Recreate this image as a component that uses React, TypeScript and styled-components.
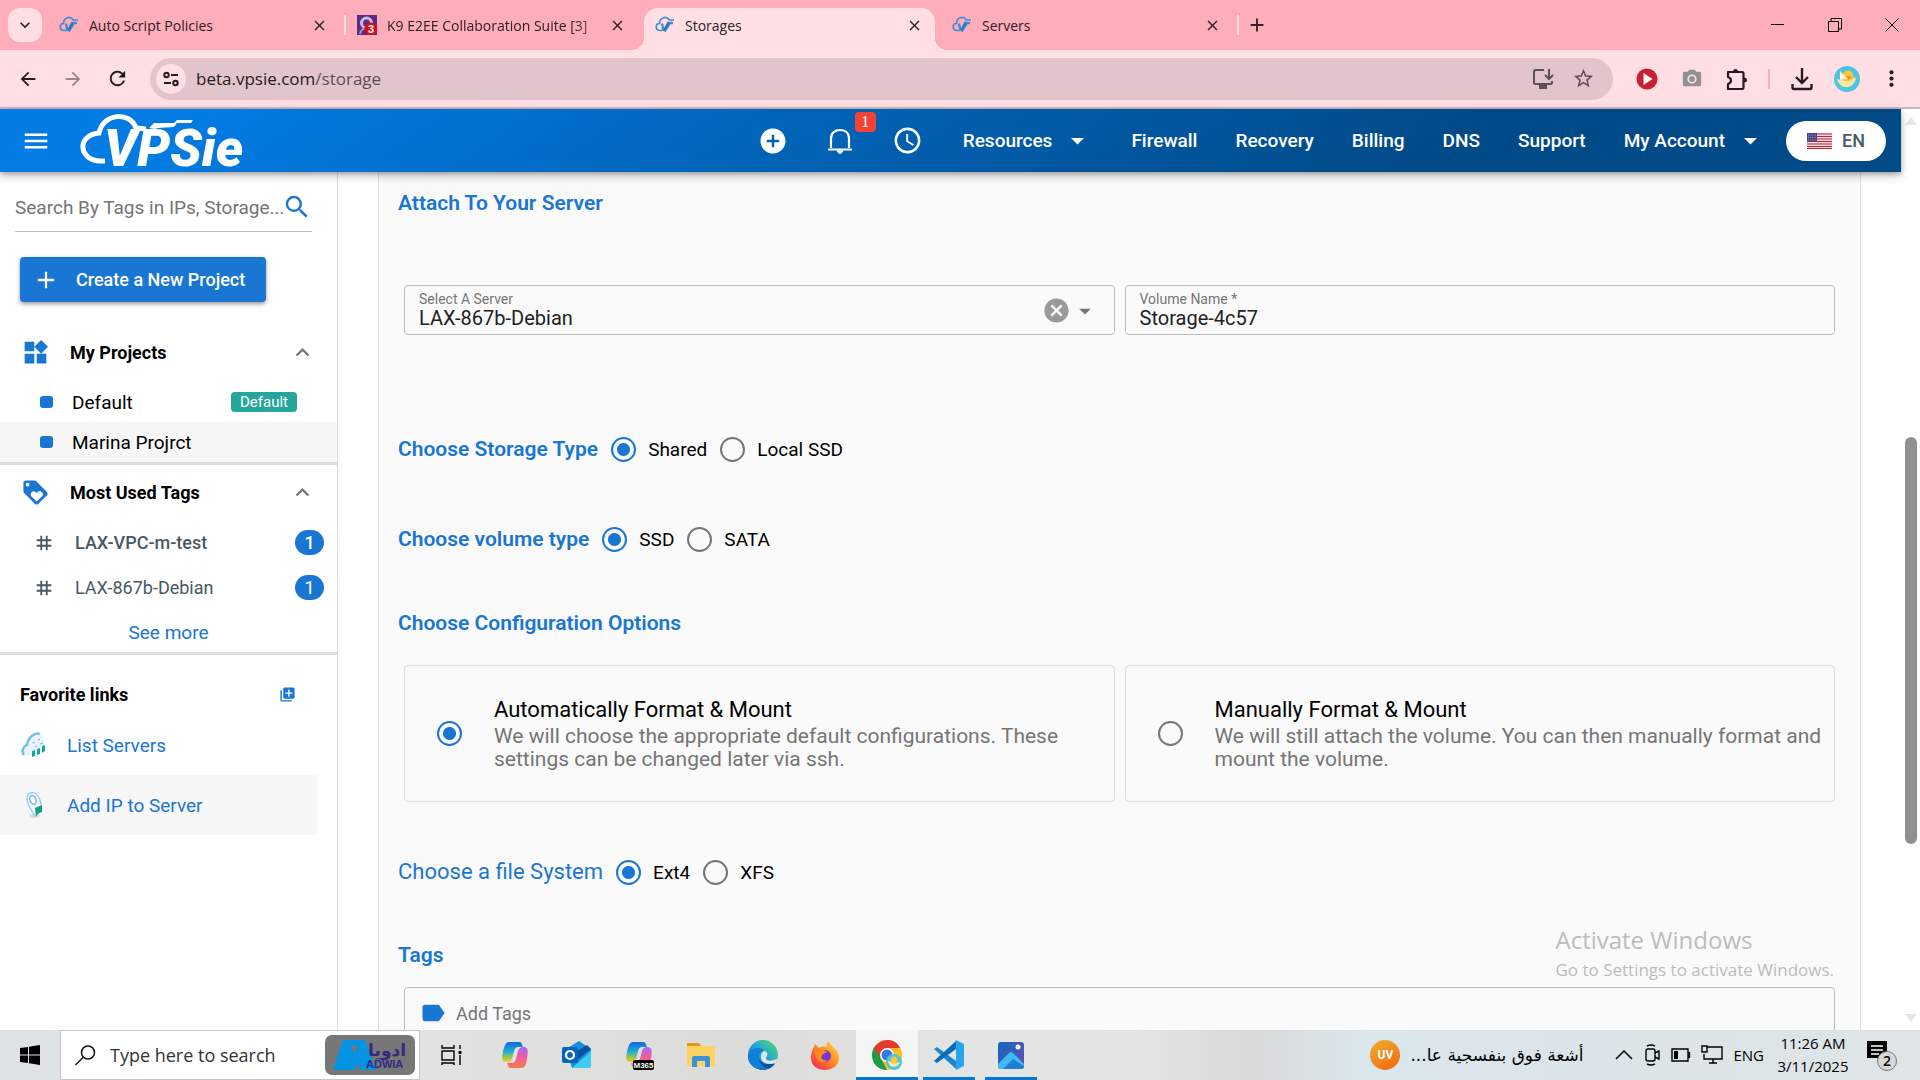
import React from "react";
import styled, { createGlobalStyle, css } from "styled-components";
import {
  MdAccessTime, MdAdd, MdAddCircle, MdArrowBack, MdArrowDropDown, MdArrowForward, MdCancel, MdClose,
  MdExpandLess, MdLabel, MdLibraryAdd, MdLoyalty, MdMenu, MdMoreVert, MdNotificationsNone,
  MdOutlineExtension, MdPhotoCamera, MdRefresh, MdSearch, MdStarBorder,
  MdTag, MdWidgets, MdExpandMore,
} from "react-icons/md";

const BLUE = "#1976d2";
const UI = `Roboto, "Liberation Sans", sans-serif`;
const SYS = `"Open Sans", "Noto Sans", sans-serif`;

const GlobalStyle = createGlobalStyle`
  *, *::before, *::after { box-sizing: border-box; }
  body { margin: 0; background: #fff; }
  button, input, select { font: inherit; color: inherit; }
  button { border: 0; padding: 0; background: none; cursor: pointer; display: inline-flex; align-items: center; justify-content: center; }
  a { text-decoration: none; color: inherit; }
  svg { display: block; flex: none; }
`;

const Screen = styled.div`
  display: flex;
  flex-direction: column;
  height: 100vh;
  overflow: hidden;
  font-family: ${UI};
  font-size: 18px;
  color: #000;
`;

/* ---------- browser chrome ---------- */
const TabStrip = styled.div`
  display: flex;
  align-items: center;
  height: 50px;
  flex: none;
  padding-left: 8px;
  background: #ffacbb;
  font-family: ${SYS};
  font-size: 14px;
  color: #2b2126;
`;
const TabMenu = styled.button`
  width: 34px;
  height: 34px;
  margin-right: 6px;
  border-radius: 12px;
  background: #ffdee4;
`;
const Tab = styled.div<{ $active?: boolean; $line?: boolean }>`
  display: flex;
  align-items: center;
  gap: 10px;
  width: 298px;
  height: 42px;
  align-self: flex-end;
  padding: 0 18px 8px 11px;
  position: relative;
  ${(p) => p.$line && css`
    &::after { content: ""; position: absolute; right: 0; top: 7px; width: 2px; height: 20px; background: #ffdee4; }
  `}
  ${(p) => p.$active && css`
    width: 291px;
    margin-right: 6px;
    padding-right: 12px;
    background: #ffdee4;
    border-radius: 14px 14px 0 0;
    &::before, &::after { content: ""; position: absolute; bottom: 0; width: 12px; height: 12px; }
    &::before { left: -12px; background: radial-gradient(circle at 0 0, transparent 12px, #ffdee4 12px); }
    &::after { right: -12px; background: radial-gradient(circle at 100% 0, transparent 12px, #ffdee4 12px); }
  `}
`;
const TabTitle = styled.span<{ $fade?: boolean }>`
  flex: 1;
  overflow: hidden;
  white-space: nowrap;
  ${(p) => p.$fade && css`mask-image: linear-gradient(90deg, #000 88%, transparent 110%);`}
`;
const NewTab = styled.button`
  width: 36px;
  height: 34px;
`;
const WindowButtons = styled.div`
  display: flex;
  margin-left: auto;
`;
const WindowButton = styled.button`
  width: 57px;
  height: 50px;
`;
const Toolbar = styled.div`
  display: flex;
  align-items: center;
  height: 59px;
  flex: none;
  padding: 0 6px 0 5px;
  background: #ffdee4;
  border-bottom: 2px solid #cdb3ba;
  font-family: ${SYS};
  color: #241c20;
`;
const ToolButton = styled.button<{ $w?: number; $dim?: boolean }>`
  width: ${(p) => p.$w ?? 45}px;
  height: 40px;
  opacity: ${(p) => (p.$dim ? 0.45 : 1)};
`;
const AddressBar = styled.div`
  display: flex;
  align-items: center;
  flex: 1;
  height: 42px;
  margin: 0 11px 0 10px;
  padding: 0 10px 0 6px;
  border-radius: 21px;
  background: #e1c5cb;
  color: #5c5054;
`;
const SiteInfo = styled.button`
  width: 30px;
  height: 30px;
  margin-right: 10px;
  border-radius: 50%;
  background: #ffdee4;
  color: #241c20;
`;
const Address = styled.span`
  flex: 1;
  font-size: 17px;
  b { font-weight: 400; color: #241c20; }
`;
const ToolDivider = styled.span`
  width: 2px;
  height: 20px;
  margin: 0 9px;
  background: #ffacbb;
`;

/* ---------- application header ---------- */
const Viewport = styled.div`
  display: flex;
  flex: 1;
  min-height: 0;
`;
const Site = styled.div`
  display: flex;
  flex-direction: column;
  flex: 1;
  min-width: 0;
`;
const Header = styled.header`
  display: flex;
  align-items: center;
  height: 63px;
  flex: none;
  padding: 0 15px 0 21px;
  position: relative;
  z-index: 1;
  background: linear-gradient(145deg, #027be3 11%, #014a88 75%);
  box-shadow: 0 2px 4px rgba(0, 0, 0, 0.2), 0 4px 9px rgba(0, 0, 0, 0.22);
  color: #fff;
  font-weight: 500;
`;
const LogoLink = styled.a`
  margin-left: 28px;
`;
const HeaderIcons = styled.div`
  display: flex;
  align-items: center;
  gap: 37px;
  margin-left: auto;
  margin-right: 40px;
`;
const IconButton = styled.button`
  position: relative;
`;
const Alert = styled.span`
  position: absolute;
  left: 30px;
  top: -14px;
  width: 21px;
  height: 20px;
  border-radius: 4px;
  background: #f44336;
  font: 16px/20px "Liberation Serif", serif;
`;
const Nav = styled.nav`
  display: flex;
  align-items: center;
  gap: 38px;
  font-size: 19px;
`;
const NavMenu = styled.button`
  gap: 10px;
  font-weight: 500;
`;
const Language = styled.button`
  gap: 10px;
  width: 100px;
  height: 40px;
  margin-left: 20px;
  border-radius: 20px;
  background: #fff;
  color: #455a64;
  font-weight: 500;
`;
const Body = styled.div`
  display: flex;
  flex: 1;
  min-height: 0;
`;

/* ---------- side bar ---------- */
const Sidebar = styled.aside`
  width: 338px;
  flex: none;
  border-right: 1px solid #ddd;
`;
const Search = styled.div`
  display: flex;
  align-items: center;
  height: 60px;
  margin: 0 25px 0 15px;
  padding-top: 11px;
  border-bottom: 1px solid #bdbdbd;
  color: ${BLUE};
  input {
    flex: 1;
    min-width: 0;
    margin-right: -4px;
    border: 0;
    padding: 0;
    outline: 0;
    background: none;
    font-size: 19px;
  }
  input::placeholder { color: #757575; opacity: 1; }
`;
const CreateButton = styled.button`
  justify-content: flex-start;
  gap: 16px;
  width: 246px;
  height: 45px;
  margin: 25px 0 20px 20px;
  padding-left: 12px;
  border-radius: 4px;
  background: ${BLUE};
  box-shadow: 0 2px 4px rgba(0, 0, 0, 0.4);
  color: #fff;
  font-weight: 500;
`;
const GroupHead = styled.button<{ $h: number }>`
  display: flex;
  width: 100%;
  height: ${(p) => p.$h}px;
  padding: 0 21px;
  justify-content: flex-start;
  gap: 20px;
  font-weight: 700;
  text-align: left;
  span { flex: 1; }
`;
const Group = styled.section`
  border-bottom: 3px solid #dedede;
`;
const Project = styled.a<{ $on?: boolean }>`
  display: flex;
  align-items: center;
  gap: 19px;
  height: 40px;
  padding: 0 40px;
  background: ${(p) => (p.$on ? "#f7f7f7" : "none")};
  font-size: 19px;
  &::before { content: ""; width: 13px; height: 12px; border-radius: 3px; background: ${BLUE}; }
`;
const DefaultBadge = styled.span`
  margin-left: auto;
  padding: 0 9px;
  border-radius: 4px;
  background: #26a69a;
  color: #fff;
  font-size: 15px;
  line-height: 20px;
`;
const TagRow = styled.a<{ $bold?: boolean }>`
  display: flex;
  align-items: center;
  gap: 20px;
  height: 45px;
  padding: 0 13px 0 33px;
  color: #455a64;
  font-weight: ${(p) => (p.$bold ? 500 : 400)};
`;
const Count = styled.span`
  width: 29px;
  margin-left: auto;
  border-radius: 13px;
  background: ${BLUE};
  color: #fff;
  text-align: center;
  line-height: 25px;
`;
const SeeMore = styled.a`
  display: block;
  height: 42px;
  color: ${BLUE};
  font-size: 19px;
  text-align: center;
  line-height: 46px;
`;
const Favorites = styled.div`
  display: flex;
  align-items: center;
  justify-content: space-between;
  height: 60px;
  padding: 18px 41px 0 20px;
  h2 { margin: 0; font-size: 18px; }
`;
const Favorite = styled.a<{ $on?: boolean }>`
  display: flex;
  align-items: center;
  gap: 19px;
  height: 60px;
  margin-right: 20px;
  padding-left: 20px;
  background: ${(p) => (p.$on ? "#f7f7f7" : "none")};
  color: ${BLUE};
  font-size: 19px;
`;

/* ---------- form ---------- */
const Main = styled.main`
  flex: 1;
  min-width: 0;
  padding: 0 40px;
  overflow: hidden;
`;
const Panel = styled.form`
  display: flex;
  flex-direction: column;
  padding: 19px 25px 40px 19px;
  border: solid #ddd;
  border-width: 0 1px;
  background: #fafafa;
`;
const Heading = styled.h2<{ $light?: boolean }>`
  margin: 0;
  color: ${BLUE};
  font-size: ${(p) => (p.$light ? 22 : 21)}px;
  line-height: 24px;
  font-weight: ${(p) => (p.$light ? 400 : 600)};
`;
const Pair = styled.div<{ $top: number }>`
  display: grid;
  grid-template-columns: 1fr 1fr;
  gap: 10px;
  margin: ${(p) => p.$top}px 0 0 6px;
`;
const Field = styled.div`
  position: relative;
  height: 50px;
  border: 1px solid #bdbdbd;
  border-radius: 4px;
  label {
    position: absolute;
    left: 14px;
    top: 5px;
    color: #757575;
    font-size: 14px;
    line-height: 16px;
  }
  input, select {
    width: 100%;
    height: 48px;
    padding: 15px 14px 0;
    border: 0;
    outline: 0;
    background: none;
    appearance: none;
    color: #212121;
    font-size: 20px;
  }
`;
const FieldTools = styled.div`
  position: absolute;
  right: 15px;
  top: 10px;
  display: flex;
  align-items: center;
  color: #757575;
  pointer-events: none;
  button { color: #999; }
`;
const RadioRow = styled.div<{ $top: number }>`
  display: flex;
  align-items: center;
  height: 40px;
  margin-top: ${(p) => p.$top}px;
`;
const RadioLabel = styled.label`
  display: flex;
  align-items: center;
  gap: 12px;
  margin-left: 13px;
  font-size: 19px;
`;
const Radio = styled.input.attrs({ type: "radio" })`
  flex: none;
  width: 25px;
  height: 25px;
  margin: 0;
  border: 2px solid #757575;
  border-radius: 50%;
  appearance: none;
  &:checked {
    border-color: ${BLUE};
    background: radial-gradient(circle, ${BLUE} 6px, transparent 7px);
  }
`;
const Section = styled.div<{ $top: number }>`
  margin-top: ${(p) => p.$top}px;
`;
const Card = styled.label`
  display: flex;
  align-items: center;
  gap: 32px;
  min-height: 137px;
  padding: 0 8px 0 32px;
  border: 1px solid #ddd;
  border-radius: 4px;
`;
const CardTitle = styled.span`
  display: block;
  padding-bottom: 2px;
  font-size: 22px;
  line-height: 26px;
`;
const CardText = styled.span`
  display: block;
  color: #757575;
  font-size: 21px;
  line-height: 23px;
`;
const TagBox = styled.div`
  display: flex;
  align-items: center;
  gap: 9px;
  height: 52px;
  margin: 20px 0 0 6px;
  padding-left: 14px;
  border: 1px solid #bdbdbd;
  border-radius: 4px;
  color: ${BLUE};
  input { flex: 1; border: 0; padding: 0; outline: 0; background: none; }
  input::placeholder { color: #757575; opacity: 1; }
`;
const ScrollTrack = styled.div`
  display: flex;
  flex-direction: column;
  align-items: center;
  justify-content: space-between;
  width: 19px;
  flex: none;
  padding: 8px 0;
  background: #fff;
  color: #e3e7ea;
`;
const ScrollThumb = styled.div`
  width: 12px;
  height: 45%;
  margin-top: 142px;
  border-radius: 6px;
  background: #909090;
`;
const Watermark = styled.div`
  position: absolute;
  right: 86px;
  bottom: 96px;
  z-index: 2;
  color: #bcbcbc;
  font-family: ${SYS};
  font-size: 17px;
  line-height: 28px;
  pointer-events: none;
  strong { display: block; font-weight: 400; font-size: 24px; line-height: 32px; }
`;

/* ---------- task bar ---------- */
const Taskbar = styled.footer`
  display: flex;
  align-items: center;
  height: 50px;
  flex: none;
  background: linear-gradient(90deg, #dde3e5 0, #e2e3e1 22%, #dcdcda 38%, #e4e6e5 52%, #e3e3e2 60%, #d8d9d8 65%, #dbe6ed 71%, #dbe4e8 84%, #dfe5e7 100%);
  font-family: ${SYS};
  color: #000;
`;
const Start = styled.button`
  width: 60px;
  height: 50px;
`;
const TaskSearch = styled.label`
  display: flex;
  align-items: center;
  gap: 14px;
  width: 360px;
  height: 50px;
  padding: 0 4px 0 14px;
  border: 1px solid #c6c6c6;
  background: #fff;
  input { flex: 1; min-width: 0; border: 0; padding: 0; outline: 0; background: none; font-size: 18px; }
  input::placeholder { color: #333; opacity: 1; }
`;
const TaskButton = styled.button<{ $open?: boolean; $active?: boolean }>`
  width: 62px;
  height: 50px;
  position: relative;
  ${(p) => p.$active && css`background: #f4f5f5;`}
  ${(p) => p.$open && css`
    &::after { content: ""; position: absolute; left: ${p.$active ? 0 : 5}px; right: ${p.$active ? 0 : 5}px; bottom: 0; height: 3px; background: #0078d7; }
  `}
`;
const PinnedApps = styled.div`
  display: flex;
  margin-left: 2px;
`;
const Tray = styled.div`
  display: flex;
  align-items: center;
  margin-left: auto;
  font-size: 15px;
`;
const Weather = styled.button`
  gap: 10px;
  margin-right: 32px;
  font: 17px "DejaVu Sans", sans-serif;
`;
const Uv = styled.span`
  width: 30px;
  border-radius: 50%;
  background: linear-gradient(150deg, #ecb02c, #f4640f);
  color: #fff;
  font: 700 12px/30px ${UI};
`;
const TrayIcons = styled.div`
  display: flex;
  align-items: center;
  gap: 10px;
`;
const Clock = styled.time`
  width: 98px;
  text-align: center;
  font-size: 15px;
  line-height: 23px;
`;
const Notices = styled.button`
  width: 38px;
  height: 50px;
  margin-right: 20px;
`;

const Favicon = () => (
  <svg width="20" height="20" viewBox="0 0 20 20" fill="none" stroke="#3f8fd0">
    <path d="M7 15.500H4.500C0 15 .3 8.500 4.500 8.500 4.500 2 12 .8 14.200 5H19" strokeWidth="1.700" />
    <path d="M7 8.500l1.500 7.500M9.500 16.500L15 8h3" strokeWidth="2.400" />
    <path d="M9.300 15l4.500-8" stroke="#2878bd" strokeWidth="2.400" />
  </svg>
);
const Logo = () => (
  <svg width="177" height="63" viewBox="0 -4 177 63" role="img" aria-label="VPSie">
    <path d="M26 48h-6C-1 46-2 22 20 20c4-20 31-22 37-5l10 1" fill="none" stroke="#fff" strokeWidth="5" />
    <path d="M70 15l5-5h20l3-3h10l-2 3h-8l-3 4-16 1-3 1zM106 7h8l-2 3h-8z" fill="#fff" />
    <text x="25" y="53" fill="#fff" fontFamily="Roboto, sans-serif" fontSize="52" fontWeight="900" fontStyle="italic">VPSie</text>
  </svg>
);
const K9 = () => (
  <svg width="20" height="20" viewBox="0 0 20 20">
    <path fill="#5b2c83" d="M0 0h20v20H0z" />
    <circle cx="9.500" cy="8" r="5" fill="none" stroke="#c9bcd8" strokeWidth="3" />
    <path d="M3 19c1-5 4-6 7-6" stroke="#a78fc2" strokeWidth="2" fill="none" />
    <circle cx="14" cy="14" r="6.500" fill="#d90d18" />
    <text x="14" y="18" textAnchor="middle" fill="#fff" fontSize="11" fontWeight="700" fontFamily="Liberation Sans">3</text>
  </svg>
);
const Avatar = ({ size = 26 }: { size?: number }) => (
  <svg width={size} height={size} viewBox="0 0 26 26">
    <circle cx="13" cy="13" r="13" fill="#4cc5df" />
    <path d="M3 13c2 9 12 11 17 4 2-3 2-5 1-6l-6 4-8-1z" fill="#fbe6a8" />
    <circle cx="14" cy="10" r="5.500" fill="#f6c83c" />
    <path d="M6 5l7 8-7 1z" fill="#fff4cf" />
    <path d="M13 10l5 1-4 3z" fill="#e98622" />
  </svg>
);
const Flag = () => (
  <svg width="25" height="16" viewBox="0 0 25 16">
    <path fill="#f3d9dc" d="M0 0h25v16H0z" />
    <path d="M0 1h25M0 3.500h25M0 6h25M0 8.500h25M0 11h25M0 13.500h25M0 15.500h25" stroke="#b9253f" strokeWidth="1.200" />
    <path fill="#46467f" d="M0 0h10v8.500H0z" />
    <path d="M1 2h8M1 4.500h8M1 7h8" stroke="#b9b9d5" strokeWidth=".8" strokeDasharray="1 1.200" />
  </svg>
);
const CloudServers = () => (
  <svg width="28" height="28" viewBox="0 0 28 28">
    <path d="M3 23c-3-4-1-8 3-10C7 5 14 0 20 3c4 2 5 7 4 11L13 26z" fill="#e9f5fc" />
    <path d="M4 24c-3-4-1-8 3-10C8 6 15 1 20 3" fill="none" stroke="#79bfe8" strokeWidth="2.500" />
    <path d="M12 20l3-1v6l-3 1zM17 18l3-1v6l-3 1zM22 15l3-1v6l-3 2z" fill="#12a79d" />
    <path d="M13 12l2-1M18 9l2-1M20 13l3-1M15 16l2-1" stroke="#8fb6cf" strokeWidth="1.300" />
  </svg>
);
const PinIp = () => (
  <svg width="28" height="28" viewBox="0 0 28 28">
    <ellipse cx="14" cy="25" rx="5" ry="2" fill="#d9dde0" />
    <path d="M15 25c-4-6-8-12-8-17C7 2 12 0 16 3c5 4 6 13 4 18z" fill="#eef7fc" stroke="#8cc8e8" strokeWidth="1.200" />
    <ellipse cx="13" cy="9" rx="3" ry="4.500" fill="#fff" stroke="#7fb9dd" strokeWidth="1.600" transform="rotate(-20 13 9)" />
    <path d="M15 17l7-3v7l-3 1-3 3z" fill="#12a07c" />
  </svg>
);
const Copilot = () => (
  <>
    <path d="M9 2h10c3 0 3 3 4 5h-5c-4 0-4 5-6 12-1 2-3 3-5 3-6 0-5-4-4-11C5 5 6 2 9 2z" fill="url(#cop1)" />
    <path d="M21 28H11c-3 0-3-3-4-5h5c4 0 4-5 6-12 1-3 3-4 5-4 6 0 5 5 4 12-1 6-2 9-6 9z" fill="url(#cop2)" />
  </>
);
const Glyph = ({ children }: { children: React.ReactNode }) => (
  <svg width="30" height="30" viewBox="0 0 30 30">{children}</svg>
);
const Gradients = () => (
  <svg width="0" height="0" aria-hidden="true">
    <defs>
      <linearGradient id="cop1" x1="0" y1="0" x2="0" y2="1"><stop stopColor="#1766d9" /><stop offset=".45" stopColor="#19a9d8" /><stop offset=".8" stopColor="#a6ca44" /><stop offset="1" stopColor="#f5c822" /></linearGradient>
      <linearGradient id="cop2" x1="0" y1="0" x2="0" y2="1"><stop stopColor="#a468ec" /><stop offset=".5" stopColor="#ee5f9e" /><stop offset="1" stopColor="#fa7849" /></linearGradient>
      <linearGradient id="edge" x1="0" y1="1" x2="1" y2="0"><stop stopColor="#0b5fc4" /><stop offset=".5" stopColor="#1ca7dc" /><stop offset="1" stopColor="#5cd860" /></linearGradient>
      <linearGradient id="fox" x1="1" y1="0" x2="0" y2="1"><stop stopColor="#ffe33d" /><stop offset=".5" stopColor="#ff8420" /><stop offset="1" stopColor="#ee1a62" /></linearGradient>
      <linearGradient id="pho" x1="0" y1="0" x2="1" y2="1"><stop stopColor="#1367c1" /><stop offset="1" stopColor="#6a4caf" /></linearGradient>
    </defs>
  </svg>
);

const tabs = [
  { title: "Auto Script Policies", line: true },
  { title: "K9 E2EE Collaboration Suite [3]", k9: true },
  { title: "Storages", active: true },
  { title: "Servers", line: true },
];

const RadioGroup = ({ name, options }: { name: string; options: string[] }) => (
  <>
    {options.map((o, i) => (
      <RadioLabel key={o}><Radio name={name} defaultChecked={i === 0} />{o}</RadioLabel>
    ))}
  </>
);

export default function App() {
  return (
    <Screen>
      <GlobalStyle />
      <TabStrip>
        <TabMenu aria-label="Search tabs"><MdExpandMore size={20} /></TabMenu>
        {tabs.map((t) => (
          <Tab key={t.title} $active={t.active} $line={t.line}>
            {t.k9 ? <K9 /> : <Favicon />}
            <TabTitle $fade={t.k9}>{t.title}</TabTitle>
            <button aria-label="Close tab"><MdClose size={17} /></button>
          </Tab>
        ))}
        <NewTab aria-label="New tab"><MdAdd size={22} /></NewTab>
        <WindowButtons>
          <WindowButton aria-label="Minimize"><svg width="13" height="13" stroke="#000"><path d="M0 5.500h13" /></svg></WindowButton>
          <WindowButton aria-label="Restore"><svg width="14" height="14" fill="none" stroke="#000"><path d="M.5 3.500h10v10H.5zM3 3V.5h10.500V11H11" /></svg></WindowButton>
          <WindowButton aria-label="Close"><svg width="14" height="14" stroke="#000"><path d="M.5.5l13 13M13.500.5l-13 13" /></svg></WindowButton>
        </WindowButtons>
      </TabStrip>
      <Toolbar>
        <ToolButton aria-label="Back"><MdArrowBack size={22} /></ToolButton>
        <ToolButton aria-label="Forward" $dim><MdArrowForward size={22} /></ToolButton>
        <ToolButton aria-label="Reload"><MdRefresh size={23} /></ToolButton>
        <AddressBar>
          <SiteInfo aria-label="Site information">
            <svg width="16" height="16" fill="none" stroke="currentColor" strokeWidth="2"><circle cx="3.500" cy="4" r="2.200" /><path d="M8 4h7M1 12h7" /><circle cx="12.500" cy="12" r="2.200" /></svg>
          </SiteInfo>
          <Address><b>beta.vpsie.com</b>/storage</Address>
          <ToolButton $w={40} aria-label="Install app">
            <svg width="22" height="22" fill="none" stroke="currentColor" strokeWidth="2"><path d="M12 2H3.500Q2 2 2 3.500v11Q2 16 3.500 16h15q1.500 0 1.500-1.500V13M7 20h8M17 1v9M13 7l4 4 4-4" /><path d="M8 17h6v3H8z" fill="currentColor" /></svg>
          </ToolButton>
          <ToolButton $w={40} aria-label="Bookmark"><MdStarBorder size={23} /></ToolButton>
        </AddressBar>
        <ToolButton aria-label="Video extension">
          <svg width="22" height="22"><circle cx="11" cy="11" r="10.500" fill="#c91f31" /><path d="M7.500 5l9 6-9 6z" fill="#fff" /></svg>
        </ToolButton>
        <ToolButton aria-label="Screenshot extension"><MdPhotoCamera size={22} color="#929292" /></ToolButton>
        <ToolButton aria-label="Extensions">
          <svg width="22" height="22" fill="none" stroke="currentColor" strokeWidth="2.200" strokeLinejoin="round"><path d="M2 4h14q1.500 0 1.500 1.500v14q0 1.500-1.500 1.500H2v-5q3-1 3-3.500T2 9z" /><path d="M7 4q0-3 2.500-3T12 4zM17.500 9.500q3.500 0 3.500 2.500t-3.500 2.500z" fill="currentColor" stroke="none" /></svg>
        </ToolButton>
        <ToolDivider />
        <ToolButton aria-label="Downloads">
          <svg width="22" height="24" fill="none" stroke="currentColor" strokeWidth="2.400"><path d="M11 1v14M5 10l6 6 6-6M1.500 17v3.500q0 1.500 1.500 1.500h16q1.500 0 1.500-1.500V17" /></svg>
        </ToolButton>
        <ToolButton aria-label="Profile"><Avatar /></ToolButton>
        <ToolButton aria-label="Menu"><MdMoreVert size={25} /></ToolButton>
      </Toolbar>

      <Viewport>
        <Site>
          <Header>
            <IconButton aria-label="Menu"><MdMenu size={30} /></IconButton>
            <LogoLink href="#"><Logo /></LogoLink>
            <HeaderIcons>
              <IconButton aria-label="Add"><MdAddCircle size={30} /></IconButton>
              <IconButton aria-label="Notifications">
                <svg width="30" height="30" fill="none" stroke="#fff" strokeWidth="2.200"><path d="M6 22V12.500C6 7 10 4 15 4s9 3 9 8.500V22M3 23.500h24" /><path d="M12 25h6q-3 5-6 0z" fill="#fff" strokeWidth="1" /></svg>
                <Alert>1</Alert>
              </IconButton>
              <IconButton aria-label="History"><MdAccessTime size={31} /></IconButton>
            </HeaderIcons>
            <Nav>
              <NavMenu>Resources<MdArrowDropDown size={31} /></NavMenu>
              <a href="#">Firewall</a>
              <a href="#">Recovery</a>
              <a href="#">Billing</a>
              <a href="#">DNS</a>
              <a href="#">Support</a>
              <NavMenu>My Account<MdArrowDropDown size={31} /></NavMenu>
            </Nav>
            <Language><Flag />EN</Language>
          </Header>
          <Body>
            <Sidebar>
              <Search>
                <input aria-label="Search by tags" placeholder="Search By Tags in IPs, Storage..." />
                <MdSearch size={30} />
              </Search>
              <CreateButton><MdAdd size={28} />Create a New Project</CreateButton>
              <Group>
                <GroupHead $h={60}><MdWidgets size={29} color={BLUE} /><span>My Projects</span><MdExpandLess size={27} color="#757575" /></GroupHead>
                <Project href="#">Default<DefaultBadge>Default</DefaultBadge></Project>
                <Project href="#" $on>Marina Projrct</Project>
              </Group>
              <Group>
                <GroupHead $h={55}><MdLoyalty size={29} color={BLUE} /><span>Most Used Tags</span><MdExpandLess size={27} color="#757575" /></GroupHead>
                <TagRow href="#" $bold><MdTag size={22} />LAX-VPC-m-test<Count>1</Count></TagRow>
                <TagRow href="#"><MdTag size={22} />LAX-867b-Debian<Count>1</Count></TagRow>
                <SeeMore href="#">See more</SeeMore>
              </Group>
              <Favorites><h2>Favorite links</h2><button aria-label="Add favorite"><MdLibraryAdd size={17} color={BLUE} /></button></Favorites>
              <Favorite href="#"><CloudServers />List Servers</Favorite>
              <Favorite href="#" $on><PinIp />Add IP to Server</Favorite>
            </Sidebar>
            <Main>
              <Panel>
                <Heading>Attach To Your Server</Heading>
                <Pair $top={70}>
                  <Field>
                    <label htmlFor="server">Select A Server</label>
                    <select id="server"><option>LAX-867b-Debian</option></select>
                    <FieldTools><button type="button" aria-label="Clear"><MdCancel size={29} /></button><MdArrowDropDown size={28} /></FieldTools>
                  </Field>
                  <Field>
                    <label htmlFor="volume">Volume Name *</label>
                    <input id="volume" defaultValue="Storage-4c57" />
                  </Field>
                </Pair>
                <RadioRow $top={94}><Heading>Choose Storage Type</Heading><RadioGroup name="storage" options={["Shared", "Local SSD"]} /></RadioRow>
                <RadioRow $top={50}><Heading>Choose volume type</Heading><RadioGroup name="kind" options={["SSD", "SATA"]} /></RadioRow>
                <Section $top={52}><Heading>Choose Configuration Options</Heading></Section>
                <Pair $top={30}>
                  <Card>
                    <Radio name="config" defaultChecked />
                    <span>
                      <CardTitle>Automatically Format &amp; Mount</CardTitle>
                      <CardText>We will choose the appropriate default configurations. These settings can be changed later via ssh.</CardText>
                    </span>
                  </Card>
                  <Card>
                    <Radio name="config" />
                    <span>
                      <CardTitle>Manually Format &amp; Mount</CardTitle>
                      <CardText>We will still attach the volume. You can then manually format and mount the volume.</CardText>
                    </span>
                  </Card>
                </Pair>
                <RadioRow $top={50}><Heading $light>Choose a file System</Heading><RadioGroup name="fs" options={["Ext4", "XFS"]} /></RadioRow>
                <Section $top={51}><Heading>Tags</Heading></Section>
                <TagBox><MdLabel size={28} /><input aria-label="Tags" placeholder="Add Tags" /></TagBox>
              </Panel>
            </Main>
          </Body>
        </Site>
        <ScrollTrack>
          <svg width="12" height="8"><path d="M0 8l6-8 6 8z" fill="currentColor" /></svg>
          <ScrollThumb />
          <svg width="12" height="8"><path d="M0 0l6 8 6-8z" fill="currentColor" /></svg>
        </ScrollTrack>
      </Viewport>
      <Watermark><strong>Activate Windows</strong>Go to Settings to activate Windows.</Watermark>

      <Taskbar>
        <Gradients />
        <Start aria-label="Start"><svg width="20" height="20"><path d="M0 3l8-1v7.500H0zM9 1.800L20 0v9.500H9zM0 10.500h8V18l-8-1zM9 10.500h11V20L9 18.200z" /></svg></Start>
        <TaskSearch>
          <svg width="21" height="21" fill="none" stroke="#111" strokeWidth="1.500"><circle cx="13" cy="7.500" r="6.500" /><path d="M8.500 12L.5 20" /></svg>
          <input aria-label="Search" placeholder="Type here to search" />
          <svg width="90" height="40">
            <rect width="90" height="40" rx="7" fill="#777" />
            <path d="M8 35L18 5h22l11 30H36l-3-6-4 6zM26 11l4 8 3-8z" fill="#0492e2" fillRule="evenodd" />
            <text x="81" y="21" textAnchor="end" fill="#33297e" fontSize="17" fontWeight="700" fontFamily="DejaVu Sans">ادويا</text>
            <text x="41" y="33" fill="#33297e" fontSize="11" fontWeight="700" fontFamily="Liberation Sans">ADWIA</text>
          </svg>
        </TaskSearch>
        <TaskButton aria-label="Task view"><svg width="21" height="20" fill="none" stroke="#000" strokeWidth="1.400"><path d="M1 6h12v9H1zM1 0v3h12V0M1 20v-2h12v2M19 0v4M19 10v10" /><path d="M17.500 6h3v3h-3z" fill="#000" stroke="none" /></svg></TaskButton>
        <PinnedApps>
          <TaskButton aria-label="Copilot"><Glyph><Copilot /></Glyph></TaskButton>
          <TaskButton aria-label="Outlook"><Glyph>
            <path d="M4 9L17 1l12 8v16q0 3-3 3H10z" fill="#1490df" /><path d="M12 13L25 5l4 4-15 12z" fill="#0c52a0" /><path d="M29 11v14q0 3-3 3H10z" fill="#3ccdf0" />
            <rect y="7" width="16" height="16" rx="2" fill="#0a64be" /><circle cx="8" cy="15" r="4" fill="none" stroke="#fff" strokeWidth="2.200" />
          </Glyph></TaskButton>
          <TaskButton aria-label="Microsoft 365"><Glyph><Copilot /><rect x="9" y="20" width="21" height="10" rx="2" fill="#000" /><text x="19.500" y="28" textAnchor="middle" fontSize="8" fontWeight="700" fill="#fff" fontFamily="Liberation Sans">M365</text></Glyph></TaskButton>
          <TaskButton aria-label="File Explorer"><Glyph>
            <path d="M1 3h12l2 3v2H1z" fill="#e09b12" /><path d="M1 6h28v20H1z" fill="#ffd264" /><path d="M6 27V18q0-2 2-2h14q2 0 2 2v9h-5v-6h-8v6z" fill="#3a93d8" />
          </Glyph></TaskButton>
          <TaskButton aria-label="Edge"><Glyph>
            <circle cx="15" cy="15" r="15" fill="url(#edge)" /><path d="M12 11c-5 8 2 16 15 12-4 8-18 10-24 0-5-8 0-14 9-12z" fill="#0d4f97" /><path d="M0 16C2 7 13 6 16 11c-5 0-6 5-5 9 2 7 8 9 10 8C10 33-1 25 0 16z" fill="#0f7fd8" /><path d="M16 11c4 0 4 4 2 7-1 3 6 4 12 0l-2 5c-9 3-16-1-15-7 0-2 1-4 3-5z" fill="#e2e3e2" />
          </Glyph></TaskButton>
          <TaskButton aria-label="Firefox"><Glyph>
            <path d="M19 1c0 5 10 7 10 17 0 16-28 16-28 0C1 11 4 8 5 4l4 4c3-2 6-2 8-1-1-2 0-4 2-6z" fill="url(#fox)" /><circle cx="15" cy="16" r="6" fill="#7a37cf" /><path d="M5 9c7-2 7 2 12 2-1 3-5 2-5 5-3 3 3 5 6 4-7 6-15-1-13-11z" fill="#ff8a1e" />
          </Glyph></TaskButton>
          <TaskButton aria-label="Chrome" $open $active><Glyph>
            <circle cx="15" cy="15" r="15" fill="#fbc116" /><path d="M2 8C8-2 23-3 28 8H15L9 19z" fill="#e23a2e" /><path d="M2 7l9 15 4 8C2 30-3 17 2 7z" fill="#219a4a" /><circle cx="15" cy="15" r="7" fill="#fff" /><circle cx="15" cy="15" r="5.500" fill="#3b78e7" />
            <circle cx="22" cy="22" r="8" fill="#4cc5df" /><path d="M16 21c1 8 10 7 12 1l-4 1" fill="#fbe6a8" /><circle cx="22" cy="20" r="3.500" fill="#f6c83c" />
          </Glyph></TaskButton>
          <TaskButton aria-label="Visual Studio Code" $open><Glyph>
            <path d="M0 9l3-2 19 14v8z" fill="#1a87d0" /><path d="M0 21l3 2L22 9V1z" fill="#0a6cb4" /><path d="M22 0l8 4v22l-8 4z" fill="#29a4f1" />
          </Glyph></TaskButton>
          <TaskButton aria-label="Photos" $open><Glyph>
            <rect x="2" y="2" width="26" height="27" rx="3" fill="url(#pho)" /><path d="M2 24l11-11q2-2 4 0l11 11v2q0 3-3 3H5q-3 0-3-3z" fill="#3cbcf0" /><path d="M7 29l10-10 11 7q0 3-3 3z" fill="#1f7fd2" /><circle cx="22" cy="7" r="2.500" fill="#fff" />
          </Glyph></TaskButton>
        </PinnedApps>
        <Tray>
          <Weather><Uv>UV</Uv><span dir="rtl">أشعة فوق بنفسجية عا...</span></Weather>
          <TrayIcons>
            <svg width="18" height="12" fill="none" stroke="#000" strokeWidth="1.500"><path d="M1 10l8-8 8 8" /></svg>
            <svg width="18" height="22" fill="none" stroke="#000" strokeWidth="1.400"><rect x="3" y="5" width="9" height="12" rx="2" /><path d="M12 9l4-2v8l-4-2M4 2q4-2 8 0M4 20q4 2 8 0" /></svg>
            <svg width="20" height="14" fill="none" stroke="#000" strokeWidth="1.400"><path d="M1 1h16v12H1zM18.500 4v6" /><path d="M3 3h4v8H3z" fill="#000" stroke="none" /></svg>
            <svg width="22" height="20" fill="none" stroke="#000" strokeWidth="1.400"><path d="M6 2h15v12H3V9M1 1h5v6H1zM8 18h8M12 14v4" /></svg>
            <span>ENG</span>
          </TrayIcons>
          <Clock>11:26 AM<br />3/11/2025</Clock>
          <Notices aria-label="Notifications">
            <svg width="32" height="32"><path d="M2 2h20v17h-5v4l-5-4H2z" /><path d="M6 7h12M6 11h12M6 15h8" stroke="#fff" strokeWidth="1.400" /><circle cx="22" cy="22" r="9.500" fill="#d5d8d9" stroke="#777" /><text x="22" y="27" textAnchor="middle" fontSize="14" fontWeight="600" fontFamily="Open Sans">2</text></svg>
          </Notices>
        </Tray>
      </Taskbar>
    </Screen>
  );
}
